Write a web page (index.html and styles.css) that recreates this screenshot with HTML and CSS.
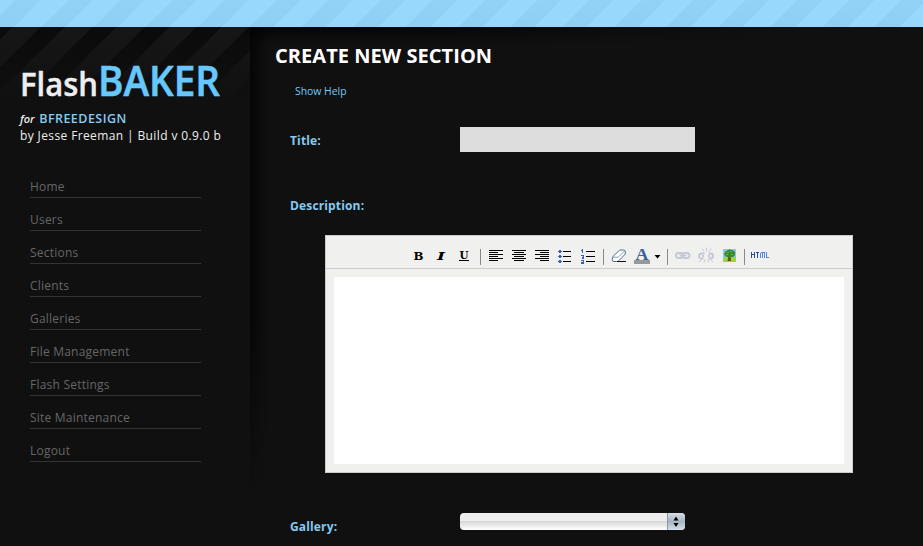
FILE: index.html
```html
<!DOCTYPE html>
<html lang="en">
<head>
<meta charset="utf-8">
<title>FlashBAKER</title>
<link rel="stylesheet" href="styles.css">
</head>
<body>
<header class="topbar"></header>
<div class="page">
  <aside class="sidebar">
    <div class="logo"><svg width="250" height="83" class="logo-svg"><text x="20" y="69" class="flash" textLength="78" lengthAdjust="spacingAndGlyphs">Flash</text><text x="98" y="69" class="baker" textLength="122" lengthAdjust="spacingAndGlyphs">BAKER</text></svg></div>
    <p class="client"><i>for</i> <b>BFREEDESIGN</b></p>
    <p class="build">by Jesse Freeman | Build v 0.9.0 b</p>
    <nav class="menu">
      <a>Home</a><a>Users</a><a>Sections</a><a>Clients</a><a>Galleries</a><a>File Management</a><a>Flash Settings</a><a>Site Maintenance</a><a>Logout</a>
    </nav>
  </aside>
  <main class="content">
    <h1>CREATE NEW SECTION</h1>
    <a class="help">Show Help</a>
    <div class="row title-row"><label>Title:</label><input class="title-input" type="text"></div>
    <div class="row desc-row"><label>Description:</label></div>
    <section class="editor">
      <div class="toolbar">
        <svg width="526" height="32" viewBox="326 236 526 32" shape-rendering="crispEdges">
          <g fill="none" stroke="#000">
            <path d="M489 250.5h14M489 252.5h9M489 254.5h14M489 256.5h9M489 258.5h14M489 260.5h9"/>
            <path d="M512 250.5h14M514 252.5h10M512 254.5h14M514 256.5h10M512 258.5h14M514 260.5h10"/>
            <path d="M535 250.5h14M540 252.5h9M535 254.5h14M540 256.5h9M535 258.5h14M540 260.5h9"/>
            <path d="M563 251.5h8M563 256.5h8M563 261.5h8M586 251.5h9M586 256.5h9M586 261.5h9"/>
          </g>
          <path d="M480.5 249v16M603.5 249v16M667.5 249v16M744.5 249v16" stroke="#888"/>
          <g class="glyphs">
            <text x="413.5" y="260" textLength="10" lengthAdjust="spacingAndGlyphs">B</text>
            <text x="437" y="260" class="italic" textLength="8" lengthAdjust="spacingAndGlyphs">I</text>
            <text x="459.5" y="259" textLength="9" lengthAdjust="spacingAndGlyphs">U</text>
          </g>
          <path d="M459 260.5h10" stroke="#000"/>
          <path d="M559 250h2v3h-2zM558 251h4v1h-4zM559 255h2v3h-2zM558 256h4v1h-4zM559 260h2v3h-2zM558 261h4v1h-4z" fill="#3d5fae"/>
          <path d="M582.5 249v4M581 250.5h2M581 255.5h2v1.5h-1v1.5h2M581 260.5h2v3h-2M581 262h2" fill="none" stroke="#3d5fae"/>
          <g shape-rendering="auto">
            <path d="M613 256.500l5.500-5.500q1-1 2.500-1h2.500q2 0 1.800 2v2l-5.800 6q-1 1.500-3 1.500h-2.500q-2 0-1.800-2z" fill="#fff" stroke="#536a93"/>
            <path d="M613 257l4 .3q1.500 0 2.500-1.300l5-5" fill="none" stroke="#8c9ec0"/>
            <path d="M617 261.500h9" stroke="#111"/>
            <text x="635.500" y="260" class="color-a" textLength="13" lengthAdjust="spacingAndGlyphs">A</text>
            <path d="M634 260h16v4h-16z" fill="#999"/>
            <path d="M654.500 255h6l-3 3.500z" fill="#000"/>
            <g fill="none" stroke="#c3c8d3" stroke-width="1.800"><rect x="676" y="253" width="7" height="5" rx="2.500"/><rect x="682.500" y="253" width="7" height="5" rx="2.500"/><path d="M679.500 255.500h7"/></g>
            <g fill="none" stroke="#c3c8d3" stroke-width="1.800"><path d="M704.500 253.500h-3q-2.500 0-2.500 2.500t2.500 2.500h2M708.500 253.500h2q2.500 0 2.500 2.500t-2.500 2.500h-2M702 256h2M708 256h2"/><path stroke-width="1" d="M706.500 247.500v4M702 248.500l2 3M711 248.500l-2 3M705 259.500l-1 3M708 259.500l1 3M711 260l2 2M701 260l-2 2"/></g>
            <path d="M723 249h13v13h-13z" fill="#8bc5ed"/><path d="M723 257h13v5h-13z" fill="#9bd63b"/><path d="M728.500 256h2l.5 5h-3.500z" fill="#754418"/><path d="M724.500 255q-1-3 2-4 2-2.500 5.500-1 3.500 1 3 4 0 3-3 3h-4.500q-2 0-3-2z" fill="#37892c"/><path d="M727 252h2v1h-2zM731 254h2v1h-2zM730 251h2v1h-2zM726 254h2v1h-2z" fill="#71b642"/>
          </g>
          <path d="M751.500 252v6M754.500 252v6M752 254.500h2M756 252.500h3M757.500 252v6" fill="none" stroke="#244f91"/><path d="M760.500 253v5M761 252.500h4M762.500 253v5M764.500 253v5M766.500 252v6M766 257.500h3" fill="none" stroke="#5585cc"/>
        </svg>
      </div>
      <div class="text-area"></div>
    </section>
    <div class="row gallery-row"><label>Gallery:</label>
      <div class="select"><span class="stepper"><svg width="17" height="17"><path d="M5.500 7.500h5l-2.500-4zM5.500 10h5l-2.500 4z"/></svg></span></div>
    </div>
  </main>
</div>
</body>
</html>
```
FILE: styles.css
```css
* { box-sizing: border-box; }
body { margin: 0; height: 546px; overflow: hidden; background: #101010; color: #eee; font-family: "Open Sans", "Noto Sans", sans-serif; }
.topbar { height: 27px; background: linear-gradient(#9adaff44, #8ccdf800), repeating-linear-gradient(135deg, #99d8fd 0 11.3px, #8fcff5 11.3px 28.5px, #99d8fd 28.5px 36.85px); }
.page { display: flex; height: 519px; }
.sidebar { width: 250px; background: linear-gradient(#10101033, #101010 75px), repeating-linear-gradient(135deg, #090909 0 9px, #181818 9px 28.5px, #090909 28.5px 36.85px); }
.logo { height: 83px; }
.logo-svg { display: block; }
.flash { font: 600 33px "Open Sans"; fill: #eee; stroke: #eee; stroke-width: .4px; }
.baker { font: 600 41px "Open Sans"; fill: #66c8ff; stroke: #66c8ff; stroke-width: .6px; }
p { margin: 0 0 0 20px; height: 17px; line-height: 17px; font-size: 12px; white-space: nowrap; }
.client i { font-size: 11px; font-weight: 600; margin-right: 1.500px; }
.client b { color: #88ccf4; font-weight: 600; font-size: 12.500px; letter-spacing: .45px; }
.build { letter-spacing: .38px; }
.menu { width: 171px; margin: 21px 0 0 30px; display: flex; flex-direction: column; }
.menu a { height: 33px; padding-top: 13px; line-height: 17px; font-size: 12px; letter-spacing: .22px; color: #666; border-bottom: 1px solid #333; }
.content { flex: 1; padding-left: 25px; background: linear-gradient(transparent 60%, #101010) no-repeat 0 0 / 30px 471px, linear-gradient(90deg, #000000b0 0, #0000 20px) no-repeat 0 0 / 30px 470px, linear-gradient(90deg, #10101000 20%, #101010 80%) no-repeat 0 0 / 100% 20px, linear-gradient(#000000b0, #0000) no-repeat 0 0 / 100% 18px; }
h1 { margin: 14px 0 0; height: 30px; line-height: 30px; font-size: 20px; font-weight: 700; letter-spacing: .05px; color: #fff; }
.help { display: block; margin: 13px 0 0 20px; height: 15px; line-height: 15px; font-size: 10.400px; color: #75c9f3; }
.row { display: flex; margin-left: 15px; font-size: 12px; font-weight: 700; letter-spacing: .15px; color: #88c9ef; }
label { width: 170px; line-height: 17px; }
.title-row { margin-top: 28px; height: 25px; }
.title-row label { padding-top: 5px; }
.title-input { width: 235px; height: 25px; border: 0; background: #ddd; }
.desc-row { margin-top: 45px; height: 38px; }
.editor { margin-left: 50px; width: 528px; height: 238px; border: 1px solid #ccc; background: #f0f0ee; }
.toolbar { height: 33px; border-bottom: 1px solid #ccc; }
.toolbar svg { display: block; }
.glyphs { font: bold 11.500px "DejaVu Serif", serif; }
.italic { font-style: italic; }
.color-a { font: bold 17px "Liberation Serif", serif; fill: #3d5f9d; }
.text-area { margin: 8px; height: 187px; background: #fff; }
.gallery-row { margin-top: 40px; }
.gallery-row label { padding-top: 5px; }
.select { display: flex; justify-content: flex-end; width: 225px; height: 17px; border-radius: 4px; overflow: hidden; background: linear-gradient(#eee 0 45%, #d8d8d8 50%, #fff); }
.stepper { width: 18px; border-left: 1px solid #8d99a6; background: linear-gradient(#d6dee6, #a6b4c2 50%, #d4e0ea); }
```
